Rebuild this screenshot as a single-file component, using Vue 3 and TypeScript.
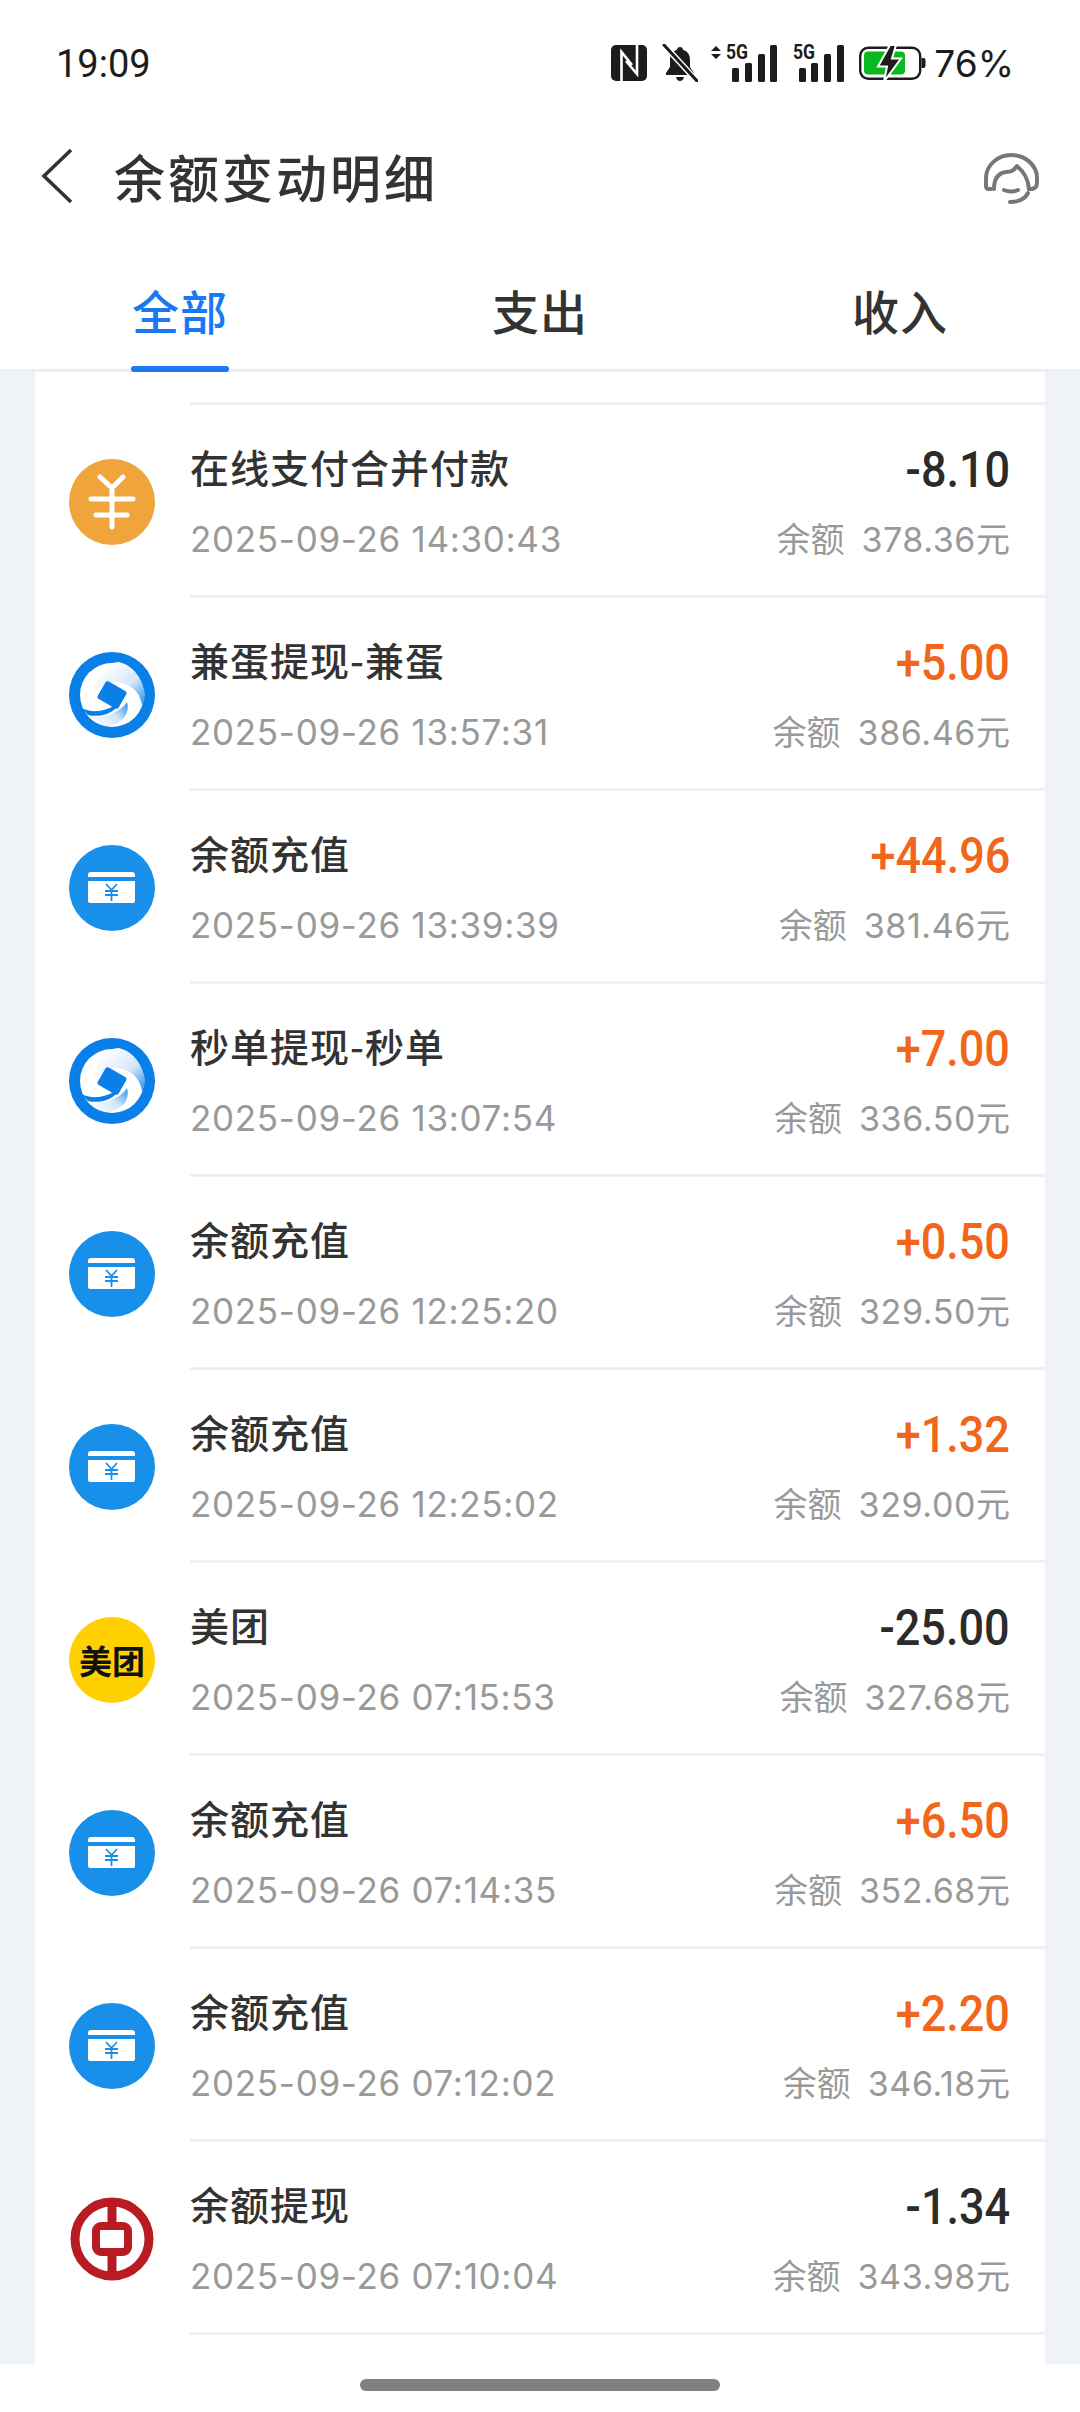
<script setup lang="ts">
interface Row {
  icon: 'yuan' | 'swirl' | 'card' | 'meituan' | 'boc'
  title: string
  time: string
  amount: string
  balance: string
}

const rows: Row[] = [
  { icon: 'yuan', title: '在线支付合并付款', time: '2025-09-26 14:30:43', amount: '-8.10', balance: '378.36' },
  { icon: 'swirl', title: '兼蛋提现-兼蛋', time: '2025-09-26 13:57:31', amount: '+5.00', balance: '386.46' },
  { icon: 'card', title: '余额充值', time: '2025-09-26 13:39:39', amount: '+44.96', balance: '381.46' },
  { icon: 'swirl', title: '秒单提现-秒单', time: '2025-09-26 13:07:54', amount: '+7.00', balance: '336.50' },
  { icon: 'card', title: '余额充值', time: '2025-09-26 12:25:20', amount: '+0.50', balance: '329.50' },
  { icon: 'card', title: '余额充值', time: '2025-09-26 12:25:02', amount: '+1.32', balance: '329.00' },
  { icon: 'meituan', title: '美团', time: '2025-09-26 07:15:53', amount: '-25.00', balance: '327.68' },
  { icon: 'card', title: '余额充值', time: '2025-09-26 07:14:35', amount: '+6.50', balance: '352.68' },
  { icon: 'card', title: '余额充值', time: '2025-09-26 07:12:02', amount: '+2.20', balance: '346.18' },
  { icon: 'boc', title: '余额提现', time: '2025-09-26 07:10:04', amount: '-1.34', balance: '343.98' }
]

const tabs = ['全部', '支出', '收入']
</script>

<template>
  <div class="page">
    <div class="statusbar">
      <span class="clock">19:09</span>
      <div class="status-icons">
        <svg class="nfc" width="36" height="36" viewBox="0 0 36 36">
          <rect width="36" height="36" rx="5" fill="#1c1c1c" />
          <path d="M10.500 36V7L21 20M26 0V29L15 16" fill="none" stroke="#fff" stroke-width="2.600" />
        </svg>
        <svg class="bell" width="36" height="38" viewBox="0 0 36 38">
          <path d="M18 3c-1.800 0-3 1.200-3 2.800C10 7.500 8 11 8 16v7l-4 6v2h28v-2l-4-6v-7c0-5-2-8.500-7-10.200C21 4.200 19.800 3 18 3zM14 33h8c-.5 2.500-2 4-4 4s-3.500-1.500-4-4z" fill="#1c1c1c" />
          <path d="M2 1l33 36" stroke="#fff" stroke-width="6" />
          <path d="M2 1l33 36" stroke="#1c1c1c" stroke-width="3" stroke-linecap="round" />
        </svg>
        <svg class="sig-a" width="67" height="43" viewBox="0 -6 67 43">
          <path d="M5 1l5 5H0zM5 14l5-5H0z" fill="#1c1c1c" />
          <text x="15" y="14" class="five-g" textLength="22" lengthAdjust="spacingAndGlyphs">5G</text>
          <rect x="21" y="23" width="7" height="14" rx="1.500" fill="#1c1c1c" />
          <rect x="34" y="18" width="7" height="19" rx="1.500" fill="#1c1c1c" />
          <rect x="47" y="9" width="7" height="28" rx="1.500" fill="#1c1c1c" />
          <rect x="59" y="0" width="7" height="37" rx="1.500" fill="#1c1c1c" />
        </svg>
        <svg class="sig-b" width="52" height="43" viewBox="0 -6 52 43">
          <text x="0" y="14" class="five-g" textLength="22" lengthAdjust="spacingAndGlyphs">5G</text>
          <rect x="6" y="23" width="7" height="14" rx="1.500" fill="#1c1c1c" />
          <rect x="18" y="18" width="7" height="19" rx="1.500" fill="#1c1c1c" />
          <rect x="31" y="9" width="7" height="28" rx="1.500" fill="#1c1c1c" />
          <rect x="44" y="0" width="7" height="37" rx="1.500" fill="#1c1c1c" />
        </svg>
        <svg class="battery" width="67" height="37" viewBox="0 0 67 37">
          <rect x="1.200" y="2.700" width="60" height="31" rx="8" fill="none" stroke="#1c1c1c" stroke-width="2.400" />
          <path d="M62.500 13h2a2 2 0 0 1 2 2v6a2 2 0 0 1-2 2h-2z" fill="#1c1c1c" />
          <rect x="5" y="6.500" width="41" height="23" rx="4" fill="#0cb81f" />
          <path d="M31 0L19 21.500H28L25 36.500L42 13.500H33L37 0z" fill="#1c1c1c" stroke="#fff" stroke-width="2" />
        </svg>
        <span class="pct">76%</span>
      </div>
    </div>

    <div class="titlebar">
      <svg class="back" width="32" height="56" viewBox="0 0 32 56">
        <path d="M30 2L3 28l27 26" fill="none" stroke="#333" stroke-width="3.600" />
      </svg>
      <span class="title">余额变动明细</span>
      <svg class="support" width="56" height="52" viewBox="0 0 56 52" fill="none" stroke="#777" stroke-width="4" stroke-linecap="round" stroke-linejoin="round">
        <path d="M7 36H5Q2 36 2 33V25C2 12 14 2 27 2C41 2 53 12 53 25V30Q53 35 48 36H45" />
        <path d="M10 36C10 26 14 20 22 19C28 19 30 17 33 13C40 19 44 25 45 36" />
        <path d="M20 37Q27 40 34 37" />
        <path d="M26 49C34 49 41 46 44 40" />
      </svg>
    </div>

    <div class="tabs">
      <div v-for="(t, i) in tabs" :key="t" class="tab" :class="{ active: i === 0 }">{{ t }}</div>
    </div>

    <div class="list-wrap">
      <div class="card">
        <div class="top-stub"></div>
        <div v-for="r in rows" :key="r.time" class="row">
          <div class="ico">
            <svg v-if="r.icon === 'yuan'" width="86" height="86" viewBox="0 0 86 86">
              <circle cx="43" cy="43" r="43" fill="#efa53b" />
              <path d="M31 18l12 11 11-11M22 40h42M27 56h31M43 29v39" fill="none" stroke="#fff" stroke-width="5" stroke-linecap="round" />
            </svg>
            <svg v-else-if="r.icon === 'swirl'" width="86" height="86" viewBox="0 0 86 86">
              <defs>
                <linearGradient id="sw1" x1="0.2" y1="0.1" x2="0.9" y2="0.9">
                  <stop offset="0" stop-color="#fff" />
                  <stop offset="0.6" stop-color="#d3e6fa" />
                  <stop offset="1" stop-color="#4ea2ef" />
                </linearGradient>
                <linearGradient id="sw2" x1="0" y1="0.8" x2="1" y2="0.2">
                  <stop offset="0" stop-color="#fff" />
                  <stop offset="0.6" stop-color="#d3e6fa" />
                  <stop offset="1" stop-color="#4ea2ef" />
                </linearGradient>
              </defs>
              <circle cx="43" cy="43" r="43" fill="#0a7fe8" />
              <circle cx="43" cy="43" r="32" fill="#fff" />
              <path d="M28 38C26 22 34 12 49 10C62 12 73 24 76 42C76 46 75 50 73 53C71 42 66 36 56 32C46 28 36 30 28 38Z" fill="url(#sw1)" />
              <path d="M19 64C32 67 50 62 58 50C60 56 58 62 55 66C50 71 44 74 37 74C30 72 24 69 19 64Z" fill="url(#sw2)" />
              <path d="M12 56C22 61 36 60 46 53L48 55C40 64 27 65 19 63Z" fill="#0a7fe8" />
              <rect x="31" y="33" width="24" height="20" rx="2.500" transform="rotate(30 43 43)" fill="#0a7fe8" />
            </svg>
            <svg v-else-if="r.icon === 'card'" width="86" height="86" viewBox="0 0 86 86">
              <circle cx="43" cy="43" r="43" fill="#1890ea" />
              <path d="M19 32v-2a3 3 0 0 1 3-3h41a3 3 0 0 1 3 3v2z" fill="#fff" />
              <path d="M19 36h47v20a2 2 0 0 1-2 2H21a2 2 0 0 1-2-2z" fill="#fff" />
              <path d="M37 39l5.500 6 5.500-6M36 46h13M36 50h13M42.500 45v11" fill="none" stroke="#1890ea" stroke-width="1.800" />
            </svg>
            <div v-else-if="r.icon === 'meituan'" class="mt">美团</div>
            <svg v-else width="86" height="86" viewBox="0 0 86 86">
              <circle cx="43" cy="43" r="37" fill="none" stroke="#b81c22" stroke-width="9" />
              <path d="M43 6v22M43 58v22" stroke="#b81c22" stroke-width="9" />
              <rect x="27" y="30" width="32" height="26" rx="5" fill="#fff" stroke="#b81c22" stroke-width="8" />
            </svg>
          </div>
          <div class="body">
            <div class="line">
              <span class="name">{{ r.title }}</span>
              <span class="amount" :class="{ plus: r.amount.startsWith('+') }">{{ r.amount }}</span>
            </div>
            <div class="line sub">
              <span class="time">{{ r.time }}</span>
              <span class="bal">余额<span class="bal-num">{{ r.balance }}</span>元</span>
            </div>
          </div>
        </div>
      </div>
    </div>

    <div class="homebar"><span class="pill"></span></div>
  </div>
</template>

<style>
html, body {
  margin: 0;
  background: #fff;
}
</style>

<style scoped>
.page {
  width: 1080px;
  height: 2412px;
  display: flex;
  flex-direction: column;
  background: #fff;
  font-family: "Noto Sans CJK SC", "Noto Sans", sans-serif;
  color: #333;
}

.statusbar {
  height: 126px;
  box-sizing: border-box;
  padding: 0 66px 0 56px;
  display: flex;
  align-items: center;
  justify-content: space-between;
}

.clock {
  font-family: Roboto, sans-serif;
  font-size: 38px;
  color: #1c1c1c;
  margin-top: 2px;
}

.status-icons {
  display: flex;
  align-items: center;
}

.bell { margin-left: 15px; }
.sig-a { margin-left: 13px; margin-top: -6px; }
.sig-b { margin-left: 15px; margin-top: -6px; }
.battery { margin-left: 14px; }

.five-g {
  font-family: Roboto, sans-serif;
  font-size: 20px;
  font-weight: 700;
  fill: #1c1c1c;
}

.pct {
  margin-left: 8px;
  font-family: Inter, sans-serif;
  font-size: 37px;
  font-weight: 400;
  color: #1c1c1c;
}

.titlebar {
  height: 100px;
  display: flex;
  align-items: center;
  padding: 0 40px 4px 41px;
}

.title {
  margin-left: 41px;
  font-size: 51px;
  font-weight: 500;
  letter-spacing: 3px;
  flex: 1;
}

.tabs {
  height: 142px;
  box-sizing: border-box;
  display: flex;
  border-bottom: 3px solid #eeeeee;
}

.tab {
  flex: 1;
  text-align: center;
  font-size: 47px;
  font-weight: 500;
  line-height: 1;
  padding-top: 56px;
  position: relative;
  letter-spacing: 1px;
}

.tab.active {
  color: #1a78f2;
}

.tab.active::after {
  content: "";
  position: absolute;
  left: 131px;
  bottom: -3px;
  width: 98px;
  height: 6px;
  border-radius: 3px;
  background: #1a78f2;
}

.list-wrap {
  flex: 1;
  min-height: 0;
  overflow: hidden;
  display: flex;
  flex-direction: column;
  background: #eff3f8;
  padding: 0 35px;
}

.card {
  flex: 1;
  min-height: 0;
  background: #fff;
}

.top-stub {
  height: 30px;
  margin-left: 155px;
  border-bottom: 3px solid #f0f0f0;
}

.row {
  display: flex;
  align-items: center;
  height: 193px;
}

.ico {
  width: 86px;
  height: 86px;
  margin: 0 35px 0 34px;
  flex: none;
}

.ico svg {
  display: block;
}

.mt {
  width: 86px;
  height: 86px;
  border-radius: 50%;
  background: #ffd100;
  color: #111;
  font-size: 33px;
  font-weight: 700;
  line-height: 86px;
  text-align: center;
}

.body {
  flex: 1;
  height: 193px;
  box-sizing: border-box;
  border-bottom: 3px solid #f0f0f0;
  padding: 37px 35px 0 0;
}

.line {
  display: flex;
  justify-content: space-between;
  align-items: center;
  height: 48px;
}

.line.sub {
  margin-top: 25px;
}

.name {
  font-size: 39px;
  font-weight: 500;
  letter-spacing: 1px;
}

.amount {
  font-family: Roboto, sans-serif;
  font-size: 50px;
  font-weight: 500;
  color: #2b2b2b;
  margin-top: 8px;
  transform: scaleX(0.9);
  transform-origin: right center;
}

.amount.plus {
  color: #f2661c;
}

.time {
  font-family: Inter, sans-serif;
  font-size: 35px;
  letter-spacing: 0.7px;
  color: #999;
}

.bal {
  font-family: Inter, "Noto Sans CJK SC", sans-serif;
  font-size: 34px;
  color: #999;
  margin-bottom: 3px;
}

.bal-num {
  margin-left: 17px;
  letter-spacing: 0.6px;
}

.homebar {
  height: 48px;
  display: flex;
  justify-content: center;
  padding-top: 15px;
  box-sizing: border-box;
}

.pill {
  width: 360px;
  height: 12px;
  border-radius: 6px;
  background: #808080;
}

.support {
  flex: none;
  margin-top: 6px;
}
</style>
